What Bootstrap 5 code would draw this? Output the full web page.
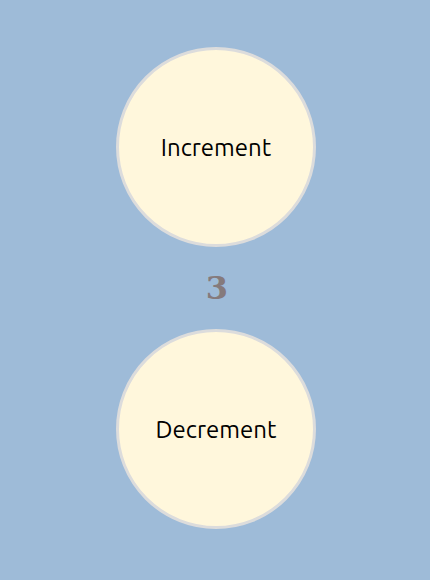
<!DOCTYPE html>
<html lang="en">
<head>
<meta charset="utf-8">
<meta name="viewport" content="width=device-width, initial-scale=1">
<title>Counter</title>
<link href="https://cdn.jsdelivr.net/npm/bootstrap@5.3.0/dist/css/bootstrap.min.css" rel="stylesheet">
<style>
body { background: #9ebbd8; }
.counter { padding: 47px 0 0 2px; }
.round-btn {
  width: 200px; height: 200px; padding: 2px 0 0;
  background: #fff7dc; border: 3px solid #dcdcdc; color: #000;
  font: 400 24px/30px Ubuntu, "Noto Sans", "Open Sans", sans-serif;
}
.tally {
  margin: 22px 0 21px;
  padding-left: 2px;
  color: #857a7c;
  font: bold 32px/39px "DejaVu Serif", serif;
}
</style>
</head>
<body>
<main class="counter d-flex flex-column align-items-center">
  <button type="button" id="inc" class="round-btn rounded-circle">Increment</button>
  <output id="count" class="tally d-block text-center">3</output>
  <button type="button" id="dec" class="round-btn rounded-circle">Decrement</button>
</main>
<script src="https://cdn.jsdelivr.net/npm/bootstrap@5.3.0/dist/js/bootstrap.bundle.min.js"></script>
<script>
const count = document.getElementById('count');
const step = n => { count.textContent = Number(count.textContent) + n; };
document.getElementById('inc').addEventListener('click', () => step(1));
document.getElementById('dec').addEventListener('click', () => step(-1));
</script>
</body>
</html>
